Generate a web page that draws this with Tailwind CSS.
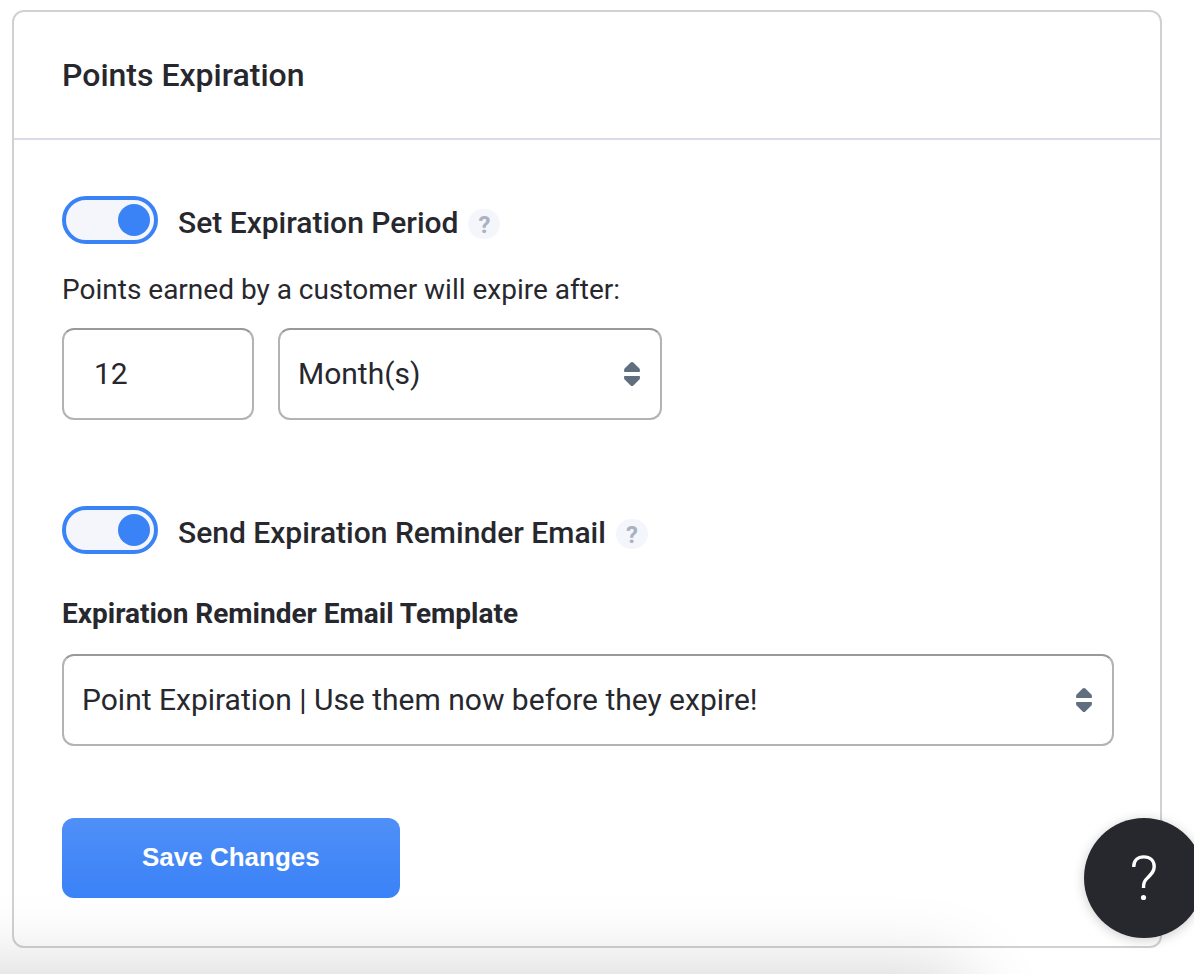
<!DOCTYPE html>
<html lang="en">
<head>
  <meta charset="UTF-8">
  <meta name="viewport" content="width=device-width, initial-scale=1.0">
  <title>Points Expiration</title>
  <script src="https://cdn.jsdelivr.net/npm/@tailwindcss/browser@4"></script>
</head>
<body class="bg-white min-h-screen overflow-x-hidden pt-[10px] pl-3 pr-8 pb-[26px] font-['Roboto',sans-serif] text-[#27282e]">

  <!-- Settings card -->
  <main class="border-2 border-[#d1d1d1] rounded-xl">
    <header class="px-12 py-[42px] border-b-2 border-[#d9dce6]">
      <h1 class="text-[32px] leading-[42px] font-medium">Points Expiration</h1>
    </header>

    <form id="expirationForm" class="pl-12 pr-[46px] pt-14 pb-12">
      <!-- Expiration period -->
      <div class="flex items-center">
        <input id="setPeriod" type="checkbox" checked class="appearance-none shrink-0 flex items-center w-24 h-12 px-1 rounded-full border-4 border-[#3a83f6] bg-[#f4f6fb] cursor-pointer before:block before:size-8 before:rounded-full before:bg-[#3a83f6] checked:before:ml-auto">
        <label for="setPeriod" class="ml-5 pt-1.5 text-[30px] leading-[42px] font-medium">Set Expiration Period</label>
        <button type="button" aria-label="About the expiration period" class="ml-2.5 mt-2 w-8 h-[30px] rounded-full bg-[#f4f6fb] text-[#aab1bf] text-[24px] leading-8 font-bold">?</button>
      </div>

      <p class="mt-7 text-[28px] leading-9">Points earned by a customer will expire after:</p>

      <div class="mt-5 flex gap-6">
        <input id="amount" type="text" inputmode="numeric" value="12" aria-label="Amount" class="w-48 h-[92px] px-[30px] pb-0.5 rounded-xl border-2 border-[#b3b3b3] border-t-[#999999] bg-white text-[30px]">
        <div class="relative w-96">
          <select id="unit" aria-label="Unit" class="appearance-none w-full h-[92px] pl-[18px] pr-16 pb-0.5 rounded-xl border-2 border-[#b3b3b3] border-t-[#999999] bg-white text-[30px]">
            <option>Day(s)</option>
            <option selected>Month(s)</option>
            <option>Year(s)</option>
          </select>
          <svg class="absolute right-[22px] top-[34px] w-4 h-6 pointer-events-none" viewBox="0 0 16 24" fill="#5f6f7f">
            <path d="M6.6.6Q8-.6 9.4.6L15.4 6.600Q16.400 8.400 15.600 10H.4Q-.4 8.400.6 6.600Z"/>
            <path d="M6.6 23.400Q8 24.600 9.400 23.400L15.400 17.400Q16.400 15.600 15.600 14H.4Q-.4 15.600.6 17.400Z"/>
          </svg>
        </div>
      </div>

      <!-- Reminder email -->
      <div class="mt-[86px] flex items-center">
        <input id="sendReminder" type="checkbox" checked class="appearance-none shrink-0 flex items-center w-24 h-12 px-1 rounded-full border-4 border-[#3a83f6] bg-[#f4f6fb] cursor-pointer before:block before:size-8 before:rounded-full before:bg-[#3a83f6] checked:before:ml-auto">
        <label for="sendReminder" class="ml-5 pt-1.5 text-[30px] leading-[42px] font-medium">Send Expiration Reminder Email</label>
        <button type="button" aria-label="About the reminder email" class="ml-2.5 mt-2 w-8 h-[30px] rounded-full bg-[#f4f6fb] text-[#aab1bf] text-[24px] leading-8 font-bold">?</button>
      </div>

      <label for="template" class="block mt-10 text-[28px] leading-10 font-bold">Expiration Reminder Email Template</label>
      <div class="relative mt-5">
        <select id="template" class="appearance-none w-full h-[92px] pl-[18px] pr-16 pb-0.5 rounded-xl border-2 border-[#b3b3b3] border-t-[#999999] bg-white text-[30px]">
          <option>Point Expiration | Use them now before they expire!</option>
        </select>
        <svg class="absolute right-[22px] top-[34px] w-4 h-6 pointer-events-none" viewBox="0 0 16 24" fill="#5f6f7f">
          <path d="M6.6.6Q8-.6 9.4.6L15.4 6.600Q16.400 8.400 15.600 10H.4Q-.4 8.400.6 6.600Z"/>
          <path d="M6.6 23.400Q8 24.600 9.400 23.400L15.400 17.400Q16.400 15.600 15.600 14H.4Q-.4 15.600.6 17.400Z"/>
        </svg>
      </div>

      <button type="submit" class="block mt-[72px] h-20 px-20 pb-0.5 rounded-xl bg-linear-to-b from-[#4f8ff8] to-[#3a82f7] text-white font-['Liberation_Sans',sans-serif] text-[26px] font-bold">Save Changes</button>
    </form>
  </main>

  <!-- Shadow cast by the panel below the window edge -->
  <div class="fixed top-full -left-20 right-[230px] h-40 pointer-events-none shadow-[0_0_80px_rgba(0,0,0,0.19)]"></div>

  <!-- Help launcher -->
  <button type="button" aria-label="Help" class="fixed -right-[10px] bottom-9 size-[120px] rounded-full bg-[#27282e] shadow-[0_2px_12px_rgba(0,0,0,0.2)] flex items-center justify-center">
    <svg class="w-6 h-[46px]" viewBox="0 0 24 46" fill="none" stroke="#fff" stroke-width="3.4">
      <path d="M1.700 12C1.700 5.500 5.800 1.900 11.800 1.900C18 1.900 22.200 5.500 22.200 11.500C22.200 16.500 19.500 19 16 22.400C12.500 25.800 11.500 27.500 11.500 33"/>
      <circle cx="11.500" cy="42.500" r="2.600" fill="#fff" stroke="none"/>
    </svg>
  </button>

  <script>
    const expirationForm = document.getElementById('expirationForm');

    // Keep the page in place when saving
    expirationForm.addEventListener('submit', (e) => e.preventDefault());
  </script>
</body>
</html>
